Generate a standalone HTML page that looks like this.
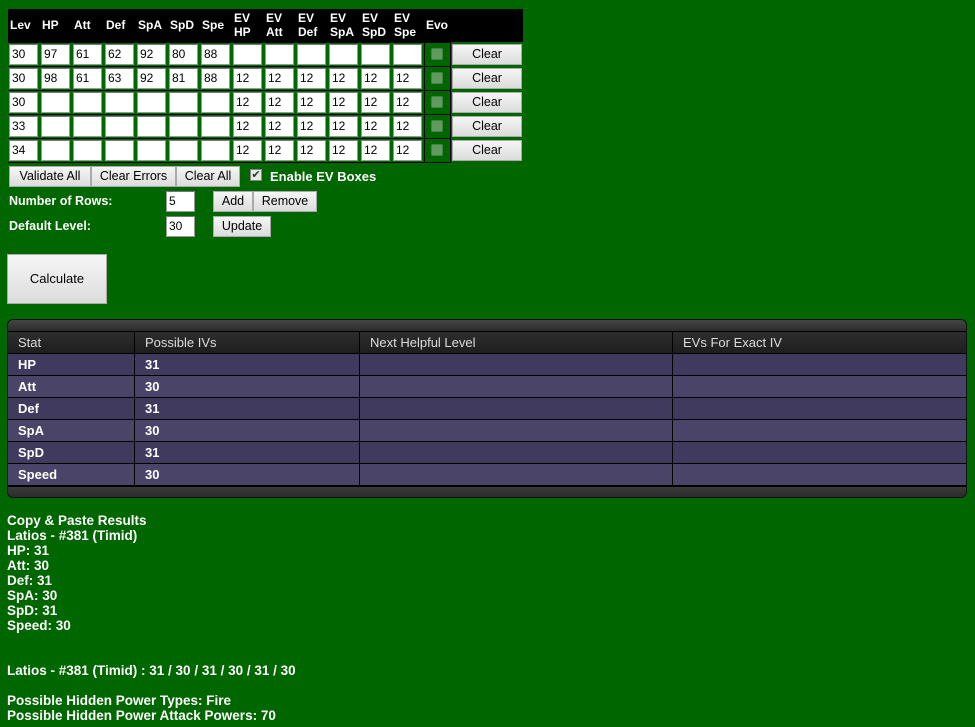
<!DOCTYPE html>
<html><head><meta charset="utf-8"><style>
*{box-sizing:border-box}
body{margin:0;width:975px;height:727px;background:#006600;font-family:"Liberation Sans",Tahoma,sans-serif;color:#fff;position:relative;overflow:hidden}
.a{position:absolute}
table.in{position:absolute;left:8px;top:9px;border-collapse:collapse;table-layout:fixed;width:515px}
table.in th{background:#000;color:#fff;font-size:12px;font-weight:bold;text-align:left;padding:0 0 0 2px;height:33px;width:32px;line-height:14px;vertical-align:middle;overflow:hidden}
table.in td{padding:0;height:24px;width:32px;border-top:1px solid #000;border-bottom:1px solid #000}
.ib{width:29px;height:21px;margin:1px 0 0 1px;background:#fff;border:1px solid #999;border-top-color:#777;color:#000;font-size:12px;line-height:19px;padding-left:2px}
.evo{width:26px;border-left:1px solid #000;border-right:1px solid #000}
.sq{width:12px;height:12px;background:#5f9a5f;border:1px solid #4a804a;margin:0 auto;border-radius:2px}
.btn{position:absolute;background:linear-gradient(#f6f6f6,#dcdcdc);border:1px solid #aaa;color:#000;font-size:12.5px;text-align:center;line-height:19px}
.lbl{position:absolute;font-size:12.5px;font-weight:bold;color:#fff}
.tbl{position:absolute;left:7px;top:319px;width:960px;height:179px;border:1px solid #111;border-radius:6px;background:#2a2a2a;overflow:hidden}
.tbl .bar{height:12px;background:linear-gradient(#444,#2b2b2b)}
.row{position:absolute;left:0;width:958px;height:22px;border-top:1px solid #000;font-size:13px;font-weight:bold;line-height:21px}
.row div{position:absolute;top:0;height:21px;padding-left:10px;border-left:1px solid #000}
.res{position:absolute;left:7px;font-size:13.5px;font-weight:bold;line-height:15px}
</style></head><body>
<table class="in">
<colgroup><col style="width:32px"><col style="width:32px"><col style="width:32px"><col style="width:32px"><col style="width:32px"><col style="width:32px"><col style="width:32px"><col style="width:32px"><col style="width:32px"><col style="width:32px"><col style="width:32px"><col style="width:32px"><col style="width:32px"><col style="width:26px"><col style="width:73px"></colgroup>
<tr><th>Lev</th><th>HP</th><th>Att</th><th>Def</th><th>SpA</th><th>SpD</th><th>Spe</th><th>EV<br>HP</th><th>EV<br>Att</th><th>EV<br>Def</th><th>EV<br>SpA</th><th>EV<br>SpD</th><th>EV<br>Spe</th><th>Evo</th><th></th></tr>
<tr><td><div class="ib">30</div></td><td><div class="ib">97</div></td><td><div class="ib">61</div></td><td><div class="ib">62</div></td><td><div class="ib">92</div></td><td><div class="ib">80</div></td><td><div class="ib">88</div></td><td><div class="ib"></div></td><td><div class="ib"></div></td><td><div class="ib"></div></td><td><div class="ib"></div></td><td><div class="ib"></div></td><td><div class="ib"></div></td><td class="evo"><div class="sq"></div></td><td style="border:none"></td></tr>
<tr><td><div class="ib">30</div></td><td><div class="ib">98</div></td><td><div class="ib">61</div></td><td><div class="ib">63</div></td><td><div class="ib">92</div></td><td><div class="ib">81</div></td><td><div class="ib">88</div></td><td><div class="ib">12</div></td><td><div class="ib">12</div></td><td><div class="ib">12</div></td><td><div class="ib">12</div></td><td><div class="ib">12</div></td><td><div class="ib">12</div></td><td class="evo"><div class="sq"></div></td><td style="border:none"></td></tr>
<tr><td><div class="ib">30</div></td><td><div class="ib"></div></td><td><div class="ib"></div></td><td><div class="ib"></div></td><td><div class="ib"></div></td><td><div class="ib"></div></td><td><div class="ib"></div></td><td><div class="ib">12</div></td><td><div class="ib">12</div></td><td><div class="ib">12</div></td><td><div class="ib">12</div></td><td><div class="ib">12</div></td><td><div class="ib">12</div></td><td class="evo"><div class="sq"></div></td><td style="border:none"></td></tr>
<tr><td><div class="ib">33</div></td><td><div class="ib"></div></td><td><div class="ib"></div></td><td><div class="ib"></div></td><td><div class="ib"></div></td><td><div class="ib"></div></td><td><div class="ib"></div></td><td><div class="ib">12</div></td><td><div class="ib">12</div></td><td><div class="ib">12</div></td><td><div class="ib">12</div></td><td><div class="ib">12</div></td><td><div class="ib">12</div></td><td class="evo"><div class="sq"></div></td><td style="border:none"></td></tr>
<tr><td><div class="ib">34</div></td><td><div class="ib"></div></td><td><div class="ib"></div></td><td><div class="ib"></div></td><td><div class="ib"></div></td><td><div class="ib"></div></td><td><div class="ib"></div></td><td><div class="ib">12</div></td><td><div class="ib">12</div></td><td><div class="ib">12</div></td><td><div class="ib">12</div></td><td><div class="ib">12</div></td><td><div class="ib">12</div></td><td class="evo"><div class="sq"></div></td><td style="border:none"></td></tr>
</table>
<div class="btn" style="left:452px;top:44px;width:70px;height:21px">Clear</div>
<div class="btn" style="left:452px;top:68px;width:70px;height:21px">Clear</div>
<div class="btn" style="left:452px;top:92px;width:70px;height:21px">Clear</div>
<div class="btn" style="left:452px;top:116px;width:70px;height:21px">Clear</div>
<div class="btn" style="left:452px;top:140px;width:70px;height:21px">Clear</div>

<div class="btn" style="left:9px;top:166px;width:82px;height:21px">Validate All</div>
<div class="btn" style="left:91px;top:166px;width:85px;height:21px">Clear Errors</div>
<div class="btn" style="left:176px;top:166px;width:64px;height:21px">Clear All</div>
<div class="a" style="left:250px;top:169px;width:12px;height:12px;background:#e8e8e8;border:1px solid #888;color:#333;font-size:11px;line-height:10px;text-align:center">✔</div>
<div class="lbl" style="left:270px;top:169px;font-size:13px">Enable EV Boxes</div>

<div class="lbl" style="left:9px;top:194px">Number of Rows:</div>
<div class="ib a" style="left:166px;top:191px;width:29px;height:21px;margin:0">5</div>
<div class="btn" style="left:213px;top:191px;width:40px;height:21px">Add</div>
<div class="btn" style="left:253px;top:191px;width:64px;height:21px">Remove</div>
<div class="lbl" style="left:9px;top:219px">Default Level:</div>
<div class="ib a" style="left:166px;top:216px;width:29px;height:21px;margin:0">30</div>
<div class="btn" style="left:213px;top:216px;width:58px;height:21px">Update</div>

<div class="btn" style="left:7px;top:254px;width:100px;height:50px;line-height:48px;font-size:13px">Calculate</div>

<div class="tbl">
<div class="bar"></div>
<div class="row" style="top:11px;background:linear-gradient(#2e2e2e,#1e1e1e);font-weight:normal;color:#ddd"><div style="left:0;width:127px;border-left:none">Stat</div><div style="left:126px;width:226px">Possible IVs</div><div style="left:351px;width:314px">Next Helpful Level</div><div style="left:664px;width:294px">EVs For Exact IV</div></div>
<div class="row" style="top:33px;background:#403a5e"><div style="left:0;border-left:none">HP</div><div style="left:126px;width:226px">31</div><div style="left:351px;width:314px"></div><div style="left:664px"></div></div>
<div class="row" style="top:55px;background:#4a4568"><div style="left:0;border-left:none">Att</div><div style="left:126px;width:226px">30</div><div style="left:351px;width:314px"></div><div style="left:664px"></div></div>
<div class="row" style="top:77px;background:#403a5e"><div style="left:0;border-left:none">Def</div><div style="left:126px;width:226px">31</div><div style="left:351px;width:314px"></div><div style="left:664px"></div></div>
<div class="row" style="top:99px;background:#4a4568"><div style="left:0;border-left:none">SpA</div><div style="left:126px;width:226px">30</div><div style="left:351px;width:314px"></div><div style="left:664px"></div></div>
<div class="row" style="top:121px;background:#403a5e"><div style="left:0;border-left:none">SpD</div><div style="left:126px;width:226px">31</div><div style="left:351px;width:314px"></div><div style="left:664px"></div></div>
<div class="row" style="top:143px;background:#4a4568"><div style="left:0;border-left:none">Speed</div><div style="left:126px;width:226px">30</div><div style="left:351px;width:314px"></div><div style="left:664px"></div></div>
<div class="a" style="left:0;top:165px;width:958px;height:13px;border-top:2px solid #000;background:linear-gradient(#3a3a3a,#2a2a2a)"></div>
</div>

<div class="res" style="top:513px">Copy &amp; Paste Results<br>Latios - #381 (Timid)<br>HP: 31<br>Att: 30<br>Def: 31<br>SpA: 30<br>SpD: 31<br>Speed: 30</div>
<div class="res" style="top:663px">Latios - #381 (Timid) : 31 / 30 / 31 / 30 / 31 / 30</div>
<div class="res" style="top:693px">Possible Hidden Power Types: Fire<br>Possible Hidden Power Attack Powers: 70</div>
</body></html>
